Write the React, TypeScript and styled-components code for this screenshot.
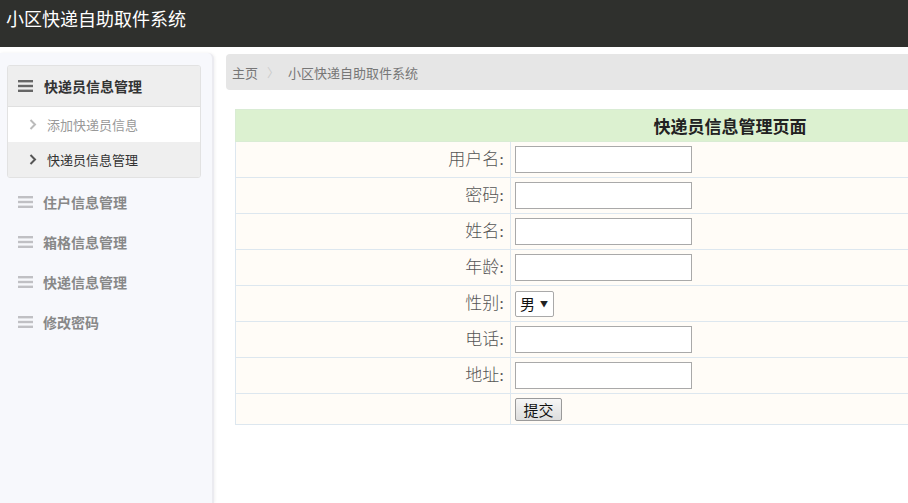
import React from 'react';
import styled, { createGlobalStyle } from 'styled-components';

const GlobalStyle = createGlobalStyle`
  html, body {
    margin: 0;
    padding: 0;
    background: #fff;
    font-family: "Noto Sans CJK SC", "Noto Sans", sans-serif;
    overflow: hidden;
  }
`;

const Page = styled.div`
  width: 908px;
  height: 503px;
  display: flex;
  flex-direction: column;
  overflow: hidden;
`;

const TopBar = styled.header`
  flex: 0 0 47px;
  background: #2f302d;
  color: #fff;
  font-size: 18px;
  line-height: 36px;
  padding-left: 6px;
`;

const Body = styled.div`
  flex: 1;
  display: flex;
  padding-top: 6px;
  gap: 12px;
  min-height: 0;
`;

const Sidebar = styled.aside`
  flex: 0 0 214px;
  background: #f7f8fc;
  border-right: 2px solid #ebebf0;
  border-top-right-radius: 6px;
  box-shadow: 1px 0 3px rgba(0, 0, 0, 0.06);
  padding: 12px 11px 0 7px;
  box-sizing: border-box;
`;

const Group = styled.div`
  border: 1px solid #e2e2e2;
  border-radius: 3px;
  overflow: hidden;
  margin-bottom: 4px;
`;

const GroupHeader = styled.div`
  height: 40px;
  display: flex;
  align-items: center;
  gap: 11px;
  padding-left: 10px;
  background: #eeeeee;
  border-bottom: 1px solid #e0e0e0;
  font-size: 14px;
  font-weight: 700;
  color: #333;
`;

const SubItem = styled.div<{ $active?: boolean }>`
  height: 35px;
  display: flex;
  align-items: center;
  gap: 10px;
  padding-left: 21px;
  font-size: 13px;
  background: ${p => (p.$active ? '#efefef' : '#fff')};
  color: ${p => (p.$active ? '#333' : '#999')};
`;

const MenuItem = styled.div`
  height: 40px;
  display: flex;
  align-items: center;
  gap: 10px;
  padding-left: 11px;
  font-size: 14px;
  font-weight: 700;
  color: #888;
`;

const Main = styled.main`
  flex: 1;
  min-width: 0;
  overflow: hidden;
  padding-top: 1px;
`;

const Crumbs = styled.div`
  height: 36px;
  display: flex;
  align-items: center;
  gap: 9px;
  padding-left: 6px;
  background: #e6e6e6;
  border-radius: 4px 0 0 4px;
  font-size: 13px;
  color: #777;
`;

const Sep = styled.span`
  color: #ccc;
  font-size: 12px;
`;

const FormTable = styled.table`
  margin: 19px 0 0 9px;
  width: 990px;
  border-collapse: collapse;
  font-family: "Liberation Serif", "Noto Sans CJK SC", serif;
  font-size: 17px;
`;

const TitleCell = styled.th`
  height: 31px;
  padding: 0;
  background: #dcf1d0;
  border: 1px solid #d9ecd4;
  font-size: 17px;
  font-weight: 700;
  color: #222;
  text-align: center;
`;

const Row = styled.tr<{ $short?: boolean }>`
  height: ${p => (p.$short ? '31px' : '36px')};
  background: #fffcf7;
`;

const LabelCell = styled.td`
  width: 268px;
  padding: 0 6px 4px 0;
  border: 1px solid #dde7ef;
  text-align: right;
  color: #555;
  font-weight: 300;
`;

const FieldCell = styled.td`
  padding: 0 0 0 4px;
  border: 1px solid #dde7ef;
`;

const TextBox = styled.input`
  display: block;
  width: 177px;
  height: 27px;
  box-sizing: border-box;
  border: 1px solid #a9a9a9;
  background: #fff;
  margin: 0;
`;

const SelectBox = styled.div`
  display: inline-flex;
  align-items: center;
  gap: 5px;
  height: 26px;
  padding: 0 5px 0 4px;
  box-sizing: border-box;
  border: 1px solid #a9a9a9;
  border-radius: 2px;
  background: #fff;
  font-family: "Noto Sans CJK SC", sans-serif;
  font-size: 15px;
  color: #111;
  vertical-align: middle;
`;

const Caret = styled.span`
  font-size: 8px;
  color: #222;
`;

const SubmitButton = styled.button`
  height: 23px;
  width: 47px;
  padding: 0;
  margin: 0;
  border: 1px solid #9a9a9a;
  border-radius: 2px;
  background: linear-gradient(#f6f6f6, #dddddd);
  font-family: "Noto Sans CJK SC", sans-serif;
  font-size: 15px;
  color: #111;
  display: block;
`;

const Bars = ({ color }: { color: string }) => (
  <svg width="15" height="12" viewBox="0 0 15 12">
    <rect x="0" y="0" width="15" height="2.4" fill={color} />
    <rect x="0" y="4.8" width="15" height="2.4" fill={color} />
    <rect x="0" y="9.6" width="15" height="2.4" fill={color} />
  </svg>
);

const Chevron = ({ color }: { color: string }) => (
  <svg width="8" height="11" viewBox="0 0 8 11">
    <path d="M1.5 1 L6 5.5 L1.5 10" stroke={color} strokeWidth="2" fill="none" />
  </svg>
);

const fields = ['用户名', '密码', '姓名', '年龄'];
const tailFields = ['电话', '地址'];

export default function App() {
  return (
    <Page>
      <GlobalStyle />
      <TopBar>小区快递自助取件系统</TopBar>
      <Body>
        <Sidebar>
          <Group>
            <GroupHeader>
              <Bars color="#666" />
              快递员信息管理
            </GroupHeader>
            <SubItem>
              <Chevron color="#bbb" />
              添加快递员信息
            </SubItem>
            <SubItem $active>
              <Chevron color="#555" />
              快递员信息管理
            </SubItem>
          </Group>
          {['住户信息管理', '箱格信息管理', '快递信息管理', '修改密码'].map(t => (
            <MenuItem key={t}>
              <Bars color="#c0c0c4" />
              {t}
            </MenuItem>
          ))}
        </Sidebar>
        <Main>
          <Crumbs>
            <span>主页</span>
            <Sep>〉</Sep>
            <span>小区快递自助取件系统</span>
          </Crumbs>
          <FormTable>
            <thead>
              <tr>
                <TitleCell colSpan={2}>快递员信息管理页面</TitleCell>
              </tr>
            </thead>
            <tbody>
              {fields.map(f => (
                <Row key={f}>
                  <LabelCell>{f}:</LabelCell>
                  <FieldCell>
                    <TextBox type="text" />
                  </FieldCell>
                </Row>
              ))}
              <Row>
                <LabelCell>性别:</LabelCell>
                <FieldCell>
                  <SelectBox>
                    男<Caret>▼</Caret>
                  </SelectBox>
                </FieldCell>
              </Row>
              {tailFields.map(f => (
                <Row key={f}>
                  <LabelCell>{f}:</LabelCell>
                  <FieldCell>
                    <TextBox type="text" />
                  </FieldCell>
                </Row>
              ))}
              <Row $short>
                <LabelCell />
                <FieldCell>
                  <SubmitButton>提交</SubmitButton>
                </FieldCell>
              </Row>
            </tbody>
          </FormTable>
        </Main>
      </Body>
    </Page>
  );
}
